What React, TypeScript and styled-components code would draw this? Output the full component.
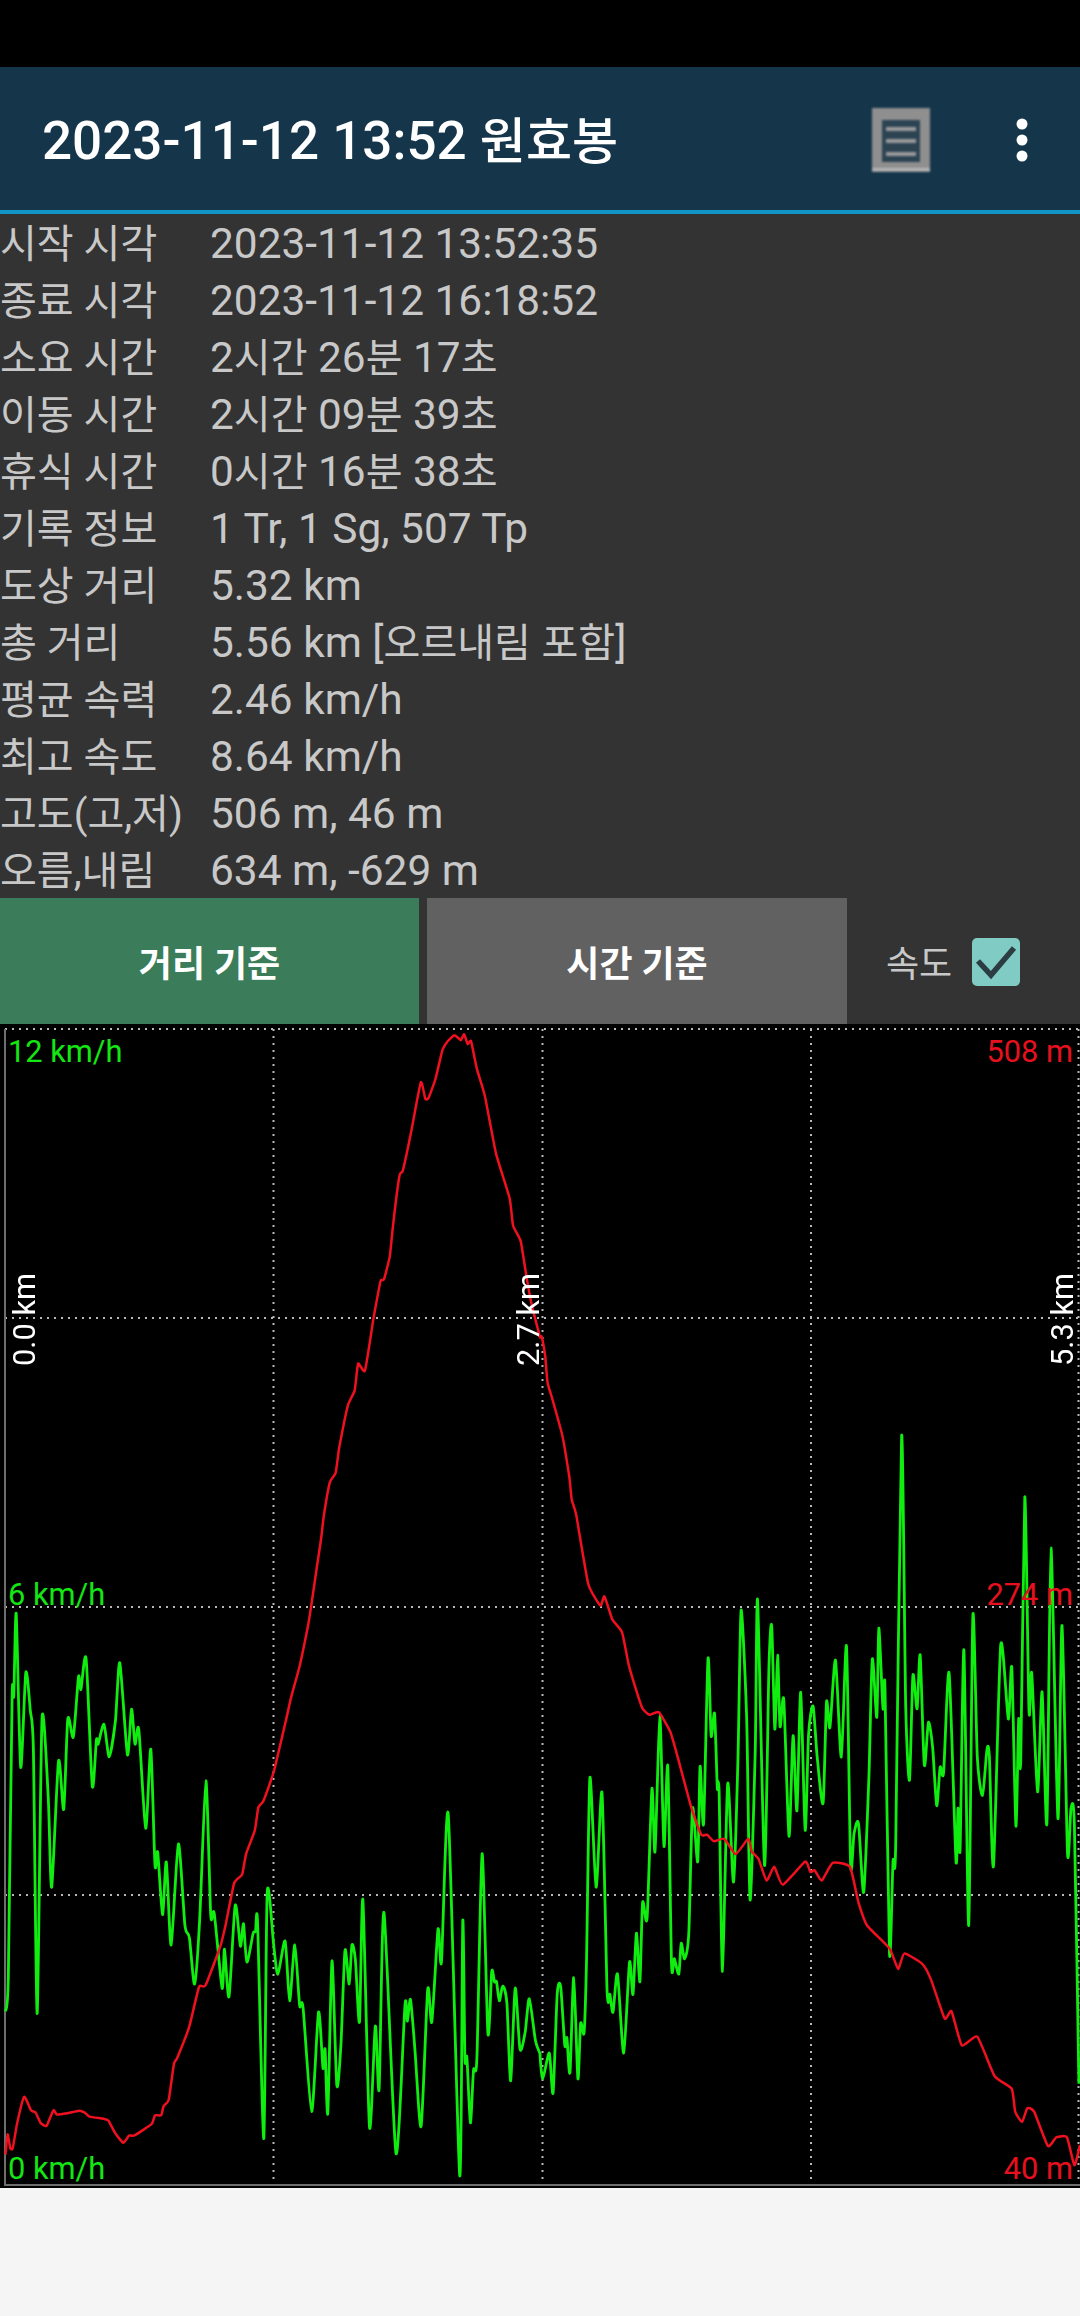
import * as React from 'react';
import styled, { createGlobalStyle } from 'styled-components';

const FONT = `Roboto, "Noto Sans CJK KR", sans-serif`;

const GlobalStyle = createGlobalStyle`
  html, body {
    margin: 0;
    padding: 0;
    background: #f5f5f5;
    font-family: ${FONT};
  }
`;

type Pt = [number, number];

// traces were read off crops of the chart, each crop has its own origin and scale
const crop = (pts: number[][], x0: number, sx: number, y0: number, sy: number): Pt[] =>
  pts.map(([x, y]) => [x0 + x / sx, y0 + y / sy] as Pt);

const redLow = crop(
  [[16,1460],[22,1412],[30,1445],[37,1445],[50,1385],[70,1323],[90,1355],[103,1360],[118,1385],[135,1392],[155,1355],[165,1365],[195,1362],[230,1356],[245,1360],[260,1370],[300,1375],[315,1380],[335,1410],[358,1432],[375,1415],[390,1415],[440,1388],[450,1367],[468,1367],[475,1345],[490,1330],[505,1245],[515,1230],[550,1155],[578,1062],[597,1058],[640,965],[655,915],[680,815],[703,795],[715,745],[740,690],[750,635],[765,620],[795,550],[830,430],[845,375],[870,300],[893,210],[905,150],[920,65],[932,0]],
  0, 2.904, 1540, 2.376
);
const redPeak = crop(
  [[940,1350],[958,1260],[975,1235],[985,1170],[1010,1060],[1030,1020],[1040,950],[1060,968],[1085,830],[1105,735],[1115,730],[1132,670],[1140,600],[1160,460],[1170,445],[1195,340],[1222,215],[1235,258],[1245,255],[1265,205],[1285,130],[1300,108],[1320,92],[1338,105],[1348,90],[1358,115],[1368,108],[1385,180],[1408,250],[1440,400],[1480,518],[1490,590],[1512,630],[1530,730],[1545,800],[1568,880]],
  0, 2.904, 1000, 2.613
);
const redFall = crop(
  [[5,880],[15,930],[22,1000],[35,1040]],
  540, 2.904, 1000, 2.613
);
const redTail = crop(
  [[65,70],[85,150],[92,195],[105,225],[140,360],[175,403],[187,385],[210,430],[238,455],[258,520],[280,570],[298,605],[318,617],[345,612],[378,650],[400,700],[440,800],[468,852],[485,852],[505,865],[535,860],[568,890],[605,860],[615,885],[635,900],[658,942],[680,915],[705,950],[770,905],[785,925],[798,922],[818,942],[850,907],[900,915],[925,985],[950,1030],[1015,1075],[1040,1115],[1058,1085],[1110,1105],[1135,1135],[1175,1212],[1195,1198],[1225,1265],[1270,1248],[1320,1325],[1370,1350],[1380,1395],[1400,1415],[1415,1388],[1435,1395],[1475,1462],[1500,1445],[1530,1445],[1552,1500],[1568,1460]],
  540, 2.904, 1400, 1.96
);

const greenLeft = crop(
  [[16,1120],[24,1040],[35,375],[40,370],[47,175],[60,540],[75,315],[88,405],[97,500],[108,1125],[122,425],[140,610],[150,825],[170,525],[185,640],[197,425],[213,468],[228,325],[235,355],[250,282],[268,585],[280,475],[285,485],[302,438],[317,515],[335,430],[348,292],[370,510],[382,402],[392,485],[403,450],[423,685],[438,497],[450,772],[458,742],[472,890],[483,765],[497,962],[518,722],[537,915],[550,945],[565,1055],[580,900],[598,572],[612,890],[622,887],[645,1065],[652,972],[665,1085],[683,868],[698,965],[707,912],[717,1003],[735,935],[742,930],[748,910],[766,1422],[776,838],[795,965],[807,1032],[828,953],[841,1095],[856,962],[870,1105],[880,1110],[905,1358],[925,1122],[938,1255],[944,1210],[952,1362],[964,1000],[978,1295],[990,1200],[1002,975],[1014,1055],[1022,962],[1032,998],[1044,1145],[1054,855],[1073,1395],[1090,1155],[1101,1305],[1115,885],[1150,1457],[1176,1105],[1183,1143],[1192,1092],[1205,1210],[1223,1393],[1242,1068],[1254,1145],[1272,925],[1282,1002],[1302,653],[1335,1510],[1344,905],[1350,1230],[1356,1230],[1366,1385],[1375,1260],[1385,1230],[1400,745],[1417,1172],[1428,1025],[1436,1050],[1442,1050],[1450,1095],[1460,1060],[1472,1100],[1483,1285],[1496,1065],[1510,1210],[1525,1170],[1537,1090],[1555,1190],[1568,1220]],
  0, 2.904, 1540, 2.376
);
const greenRight = crop(
  [[0,1285],[8,1330],[27,1280],[38,1358],[50,1165],[60,1150],[72,1265],[78,1250],[87,1318],[98,1132],[110,1330],[118,1222],[128,1240],[135,1100],[145,740],[163,955],[180,770],[195,1160],[203,1165],[212,1200],[225,1125],[243,1280],[260,1102],[270,1165],[280,1045],[290,1140],[298,985],[311,1015],[325,762],[334,885],[348,620],[360,875],[371,718],[382,1105],[390,1095],[403,1125],[410,1065],[420,1095],[432,1045],[443,800],[458,905],[465,718],[475,830],[488,507],[497,658],[507,615],[515,760],[520,765],[530,1120],[545,752],[562,945],[575,700],[584,412],[600,620],[610,980],[625,690],[632,392],[652,912],[665,520],[673,443],[682,645],[690,500],[697,640],[708,588],[723,855],[735,658],[746,805],[757,573],[770,843],[780,655],[793,600],[805,700],[822,790],[832,592],[842,642],[858,510],[875,700],[890,483],[902,910],[912,850],[925,830],[940,965],[955,740],[965,508],[978,622],[984,447],[996,605],[1002,565],[1015,1085],[1025,905],[1033,870],[1050,70],[1062,600],[1073,745],[1083,540],[1095,605],[1104,500],[1116,715],[1128,632],[1140,680],[1152,795],[1162,720],[1172,730],[1188,535],[1208,903],[1214,800],[1220,880],[1231,490],[1245,1030],[1257,422],[1270,700],[1285,775],[1298,685],[1305,700],[1317,913],[1338,480],[1360,625],[1370,525],[1382,835],[1390,625],[1396,712],[1408,190],[1420,610],[1428,535],[1445,768],[1458,572],[1472,830],[1484,290],[1504,820],[1516,442],[1532,888],[1542,800],[1552,835],[1565,1340]],
  540, 2.904, 1400, 1.96
);

// catmull-rom through the points, k keeps the overshoot at the spikes small
const smooth = (pts: Pt[], k: number) => {
  let d = `M${pts[0][0].toFixed(1)} ${pts[0][1].toFixed(1)}`;
  for (let i = 0; i < pts.length - 1; i++) {
    const p0 = pts[Math.max(i - 1, 0)];
    const p1 = pts[i];
    const p2 = pts[i + 1];
    const p3 = pts[Math.min(i + 2, pts.length - 1)];
    const c1x = p1[0] + (p2[0] - p0[0]) * k;
    const c1y = p1[1] + (p2[1] - p0[1]) * k;
    const c2x = p2[0] - (p3[0] - p1[0]) * k;
    const c2y = p2[1] - (p3[1] - p1[1]) * k;
    d += `C${c1x.toFixed(1)} ${c1y.toFixed(1)} ${c2x.toFixed(1)} ${c2y.toFixed(1)} ${p2[0].toFixed(1)} ${p2[1].toFixed(1)}`;
  }
  return d;
};

const greenPath = smooth([...greenLeft, ...greenRight], 0.12);
const redPath = smooth([...redLow, ...redPeak, ...redFall, ...redTail], 0.08);

const STATS: [string, string][] = [
  ['시작 시각', '2023-11-12 13:52:35'],
  ['종료 시각', '2023-11-12 16:18:52'],
  ['소요 시간', '2시간 26분 17초'],
  ['이동 시간', '2시간 09분 39초'],
  ['휴식 시간', '0시간 16분 38초'],
  ['기록 정보', '1 Tr, 1 Sg, 507 Tp'],
  ['도상 거리', '5.32 km'],
  ['총 거리', '5.56 km [오르내림 포함]'],
  ['평균 속력', '2.46 km/h'],
  ['최고 속도', '8.64 km/h'],
  ['고도(고,저)', '506 m, 46 m'],
  ['오름,내림', '634 m, -629 m']
];

const H_LINES = [1029, 1318, 1607, 1895];
const V_LINES = [273.5, 542.5, 811, 1078.5];

const Page = styled.div`
  width: 1080px;
  height: 2316px;
  overflow: hidden;
  display: flex;
  flex-direction: column;
  background: #f5f5f5;
`;

const StatusBar = styled.div`
  height: 67px;
  background: #000;
`;

const ActionBar = styled.header`
  height: 143px;
  box-sizing: border-box;
  display: flex;
  align-items: center;
  padding: 2px 0 0 42px;
  background: #14354a;
`;

const Title = styled.h1`
  flex: 1;
  margin: 2px 0 0;
  color: #fff;
  font-size: 53px;
  line-height: 60px;
  font-weight: 500;
  white-space: nowrap;
`;

// the phone's hangul face runs narrower than Noto next to the latin digits
const Hangul = styled.span`
  font-size: 0.945em;
  line-height: 0;
`;

const ListIcon = styled.svg`
  width: 62px;
  height: 68px;
  margin-right: 82px;
  filter: blur(0.8px);
`;

const MoreIcon = styled.svg`
  width: 16px;
  height: 52px;
  margin-right: 50px;
`;

const Divider = styled.div`
  height: 4px;
  background: #1295c4;
`;

const Stats = styled.dl`
  margin: 0;
  height: 684px;
  box-sizing: border-box;
  padding-top: 1px;
  background: #333;
  color: #c8c8c8;
  font-size: 42.4px;
`;

const StatRow = styled.div`
  display: grid;
  grid-template-columns: 210px 1fr;
  height: 57px;
  line-height: 57px;
  white-space: nowrap;
`;

const StatName = styled.dt`
  margin: 0;
`;

const StatValue = styled.dd`
  margin: 0;
`;

const Controls = styled.div`
  height: 126px;
  display: flex;
  background: #333;
`;

const ModeButton = styled.button<{ $active?: boolean }>`
  width: ${props => (props.$active ? 419 : 420)}px;
  margin-right: ${props => (props.$active ? 8 : 0)}px;
  border: 0;
  padding: 0;
  background: ${props => (props.$active ? '#3b7d5a' : '#616161')};
  color: #fff;
  font-family: ${FONT};
  font-size: 36px;
  font-weight: 700;
`;

const SpeedToggle = styled.label`
  display: flex;
  align-items: center;
  padding-left: 39px;
  color: #c8c8c8;
  font-size: 36px;
`;

const CheckBox = styled.span`
  width: 48px;
  height: 48px;
  margin: 2px 0 0 20px;
  display: flex;
  border-radius: 5px;
  background: #80cbc4;
`;

const Chart = styled.div`
  position: relative;
  height: 1164px;
  background: #000;
  overflow: hidden;
`;

const Plot = styled.svg`
  display: block;
  width: 1080px;
  height: 1164px;
`;

const ScaleLabel = styled.span<{ $side: 'left' | 'right'; $top: number; $color: string }>`
  position: absolute;
  top: ${props => props.$top}px;
  ${props => (props.$side === 'left' ? 'left: 8px;' : 'right: 7px;')}
  color: ${props => props.$color};
  font-size: 30.8px;
  line-height: 36px;
  white-space: nowrap;
`;

const DistanceLabel = styled.span<{ $left: number }>`
  position: absolute;
  top: 249px;
  left: ${props => props.$left}px;
  color: #fff;
  font-size: 30.8px;
  line-height: 30px;
  white-space: nowrap;
  writing-mode: vertical-rl;
  transform: rotate(180deg);
`;

const GREEN = '#14e614';
const RED = '#e6101e';

export default function App() {
  return (
    <Page>
      <GlobalStyle />
      <StatusBar />
      <ActionBar>
        <Title>
          2023-11-12 13:52 <Hangul>원효봉</Hangul>
        </Title>
        <ListIcon viewBox="0 0 62 68">
          <rect x="2" y="2" width="58" height="64" fill="#8f8f8f" />
          <rect x="2" y="62" width="58" height="3" fill="#b5b5b5" />
          <rect x="12" y="14" width="38" height="42" fill="#2c4352" />
          <rect x="16" y="21" width="30" height="4" fill="#9a9a9a" />
          <rect x="16" y="33" width="30" height="4" fill="#9a9a9a" />
          <rect x="16" y="46" width="30" height="4" fill="#9a9a9a" />
        </ListIcon>
        <MoreIcon viewBox="0 0 16 52">
          <circle cx="8" cy="10" r="5.5" fill="#fff" />
          <circle cx="8" cy="26" r="5.5" fill="#fff" />
          <circle cx="8" cy="42" r="5.5" fill="#fff" />
        </MoreIcon>
      </ActionBar>
      <Divider />
      <Stats>
        {STATS.map(([name, value]) => (
          <StatRow key={name}>
            <StatName>
              <Hangul>{name}</Hangul>
            </StatName>
            <StatValue>
              {value.split(/([가-힣]+)/).map((part, i) =>
                i % 2 === 1 ? <Hangul key={i}>{part}</Hangul> : part
              )}
            </StatValue>
          </StatRow>
        ))}
      </Stats>
      <Controls>
        <ModeButton $active>거리 기준</ModeButton>
        <ModeButton>시간 기준</ModeButton>
        <SpeedToggle>
          속도
          <CheckBox>
            <svg width="48" height="48" viewBox="0 0 48 48">
              <path d="M6 23l13 14L42 10" fill="none" stroke="#2b3c42" strokeWidth="5.5" />
            </svg>
          </CheckBox>
        </SpeedToggle>
      </Controls>
      <Chart>
        <Plot viewBox="0 1024 1080 1164">
          <g stroke="#b8b8b8" strokeWidth="2" strokeDasharray="2 5">
            {H_LINES.map(y => (
              <line key={y} x1="5" x2="1080" y1={y} y2={y} />
            ))}
            {V_LINES.map(x => (
              <line key={x} x1={x} x2={x} y1="1029" y2="2185" />
            ))}
          </g>
          <path d="M5 1029V2185H1080" fill="none" stroke="#6e6e6e" strokeWidth="2" />
          <path d={greenPath} fill="none" stroke="#10ee10" strokeWidth="2.8" />
          <path d={redPath} fill="none" stroke="#f01020" strokeWidth="2.5" />
        </Plot>
        <ScaleLabel $side="left" $top={10} $color={GREEN}>12 km/h</ScaleLabel>
        <ScaleLabel $side="left" $top={553} $color={GREEN}>6 km/h</ScaleLabel>
        <ScaleLabel $side="left" $top={1127} $color={GREEN}>0 km/h</ScaleLabel>
        <ScaleLabel $side="right" $top={10} $color={RED}>508 m</ScaleLabel>
        <ScaleLabel $side="right" $top={553} $color={RED}>274 m</ScaleLabel>
        <ScaleLabel $side="right" $top={1127} $color={RED}>40 m</ScaleLabel>
        <DistanceLabel $left={10}>0.0 km</DistanceLabel>
        <DistanceLabel $left={514}>2.7 km</DistanceLabel>
        <DistanceLabel $left={1048}>5.3 km</DistanceLabel>
      </Chart>
    </Page>
  );
}
